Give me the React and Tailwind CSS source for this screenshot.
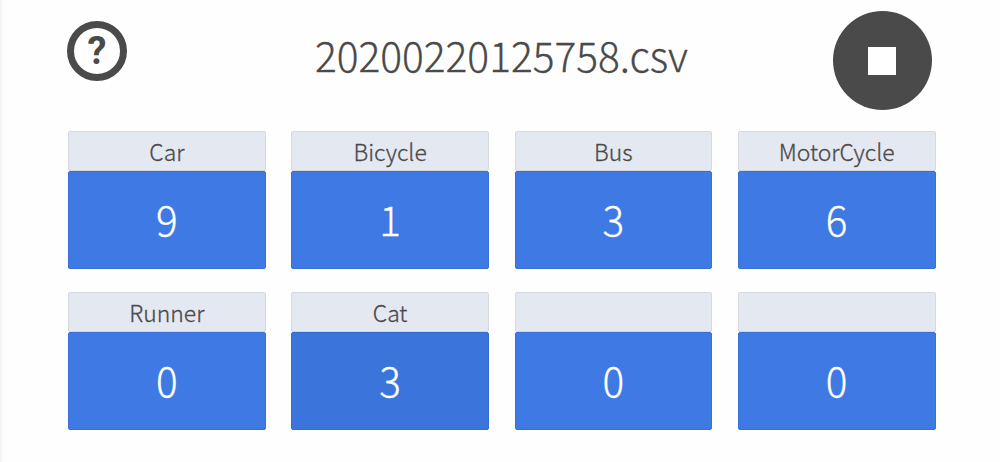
import React, { useState } from "react";

const INITIAL_COUNTERS = [
  { id: 1, label: "Car", count: 9 },
  { id: 2, label: "Bicycle", count: 1 },
  { id: 3, label: "Bus", count: 3 },
  { id: 4, label: "MotorCycle", count: 6 },
  { id: 5, label: "Runner", count: 0 },
  { id: 6, label: "Cat", count: 3 },
  { id: 7, label: "", count: 0 },
  { id: 8, label: "", count: 0 },
];

function Counter({ label, count, active, onPress }) {
  return (
    <div className="flex flex-col">
      <div className="h-[39.5px] flex items-center justify-center rounded-[2px] border border-[#d5d8de] bg-[#e4e8f1] text-[22.9px] leading-none font-light text-[#4a4a4a] [-webkit-text-stroke:0.3px]">
        <span className="pt-px">{label}</span>
      </div>
      <button
        onClick={onPress}
        className={`h-[98.5px] flex items-center justify-center rounded-[2px] border text-[40.4px] leading-none font-light text-white cursor-pointer [-webkit-text-stroke:0.3px] ${
          active ? "bg-[#3b74da] border-[#356cce]" : "bg-[#3f79e3] border-[#3a70d6]"
        }`}
      >
        <span className="-mt-[2px]">{count}</span>
      </button>
    </div>
  );
}

export default function App() {
  const [counters, setCounters] = useState(INITIAL_COUNTERS);
  const [activeId, setActiveId] = useState(6);

  const handlePress = (id) => {
    setActiveId(id);
    setCounters((prev) => prev.map((c) => (c.id === id ? { ...c, count: c.count + 1 } : c)));
  };

  return (
    <div className="w-[1000px] h-[462px] overflow-hidden bg-[#fefefe] border-l-2 border-[#f5f5f5] pl-[66px] pr-[64.5px] font-['Noto_Sans_CJK_JP',sans-serif]">
      <div className="h-[131px] flex items-start justify-between">
        <button className="mt-[21px] -ml-px w-[60px] h-[59.5px] shrink-0 flex items-center justify-center rounded-full border-[7px] border-[#4a4a4a] cursor-pointer">
          <span className="font-['Roboto',sans-serif] text-[38px] leading-none font-bold text-[#4a4a4a]">?</span>
        </button>
        <h1 className="mt-[35px] ml-[43px] text-[40.7px] leading-[40px] font-light text-[#4a4a4a] [-webkit-text-stroke:0.3px]">20200220125758.csv</h1>
        <button className="mt-[11px] mr-[3.5px] w-[99px] h-[99px] shrink-0 flex items-center justify-center rounded-full bg-[#4a4a4a] cursor-pointer">
          <span className="w-7 h-7 bg-white"></span>
        </button>
      </div>

      <div className="grid grid-cols-4 gap-x-[25.6px] gap-y-[23px]">
        {counters.map((c) => (
          <Counter
            key={c.id}
            label={c.label}
            count={c.count}
            active={c.id === activeId}
            onPress={() => handlePress(c.id)}
          />
        ))}
      </div>
    </div>
  );
}
